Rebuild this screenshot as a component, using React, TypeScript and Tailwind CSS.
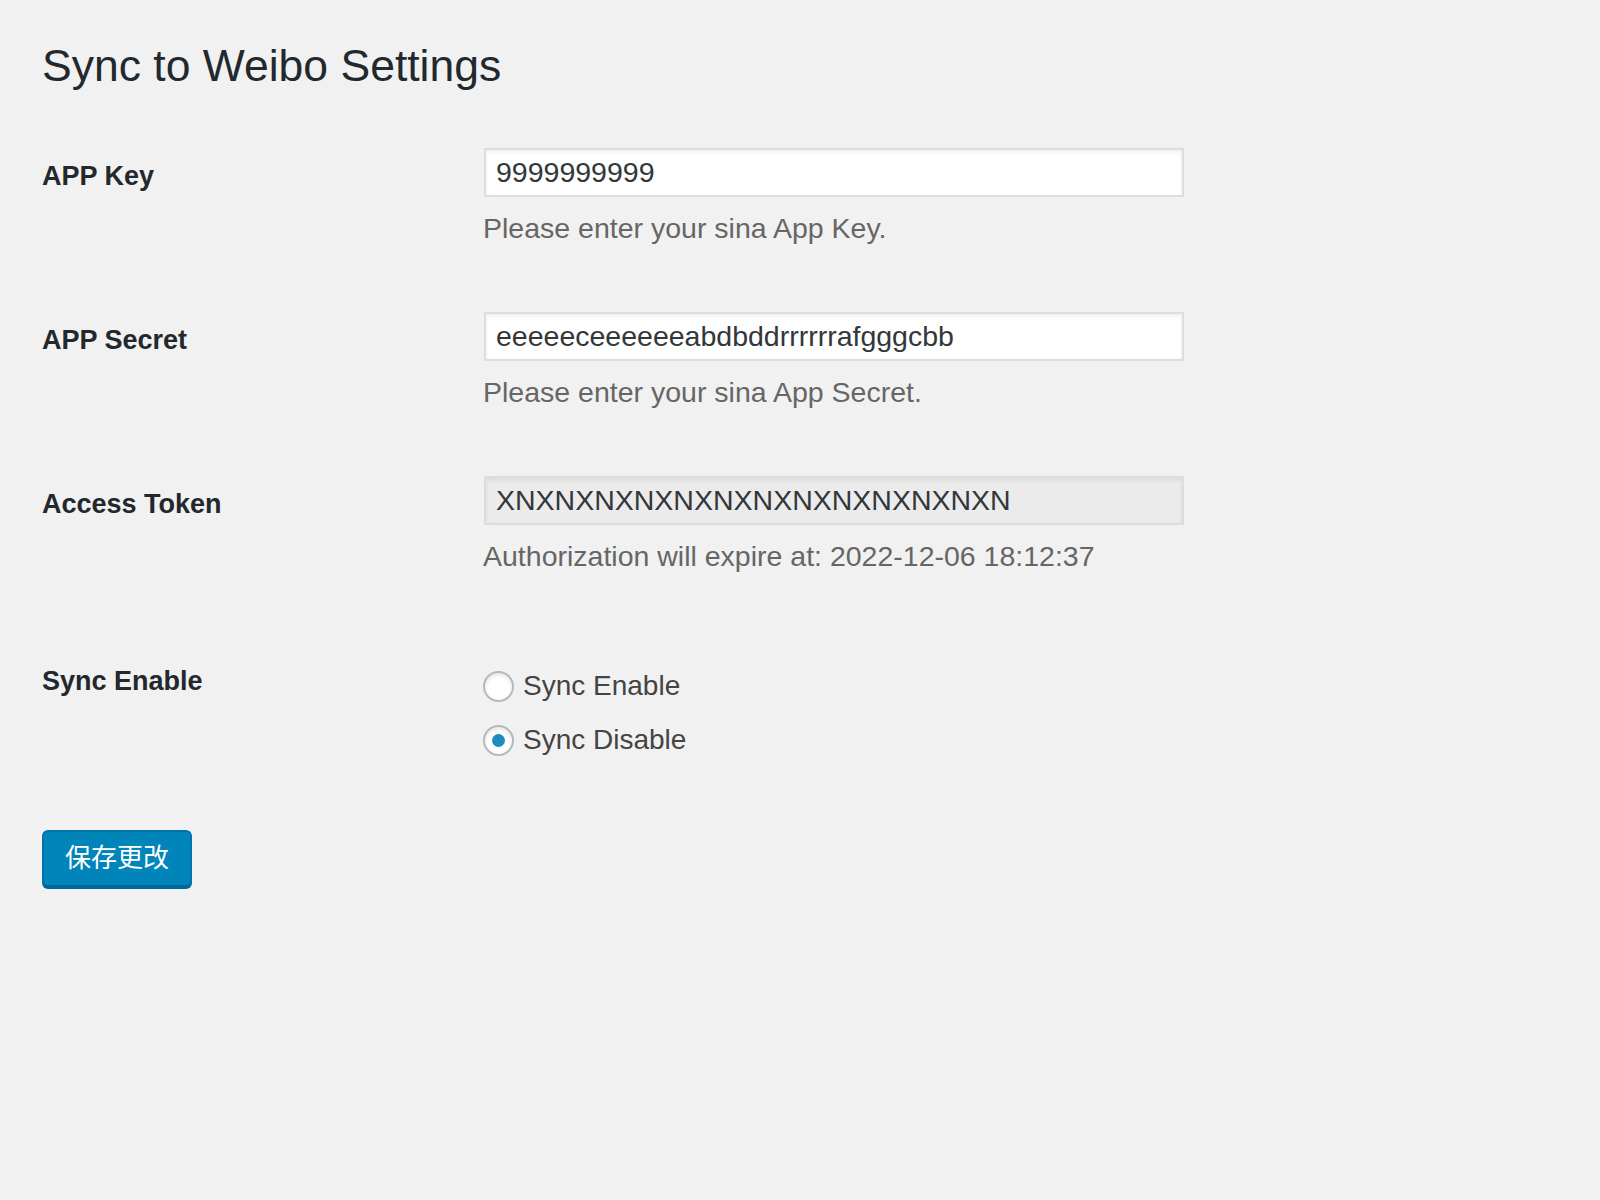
import React from 'react';

const sans = "font-['Liberation_Sans',Arial,sans-serif]";

type RowProps = {
  label: string;
  value: string;
  note: string;
  readOnly?: boolean;
};

const TextRow: React.FC<RowProps> = ({ label, value, note, readOnly }) => (
  <div className="flex items-start h-[164px]">
    <div className="w-[442px] shrink-0 pt-[40px]">
      <span className="text-[27px] leading-[36px] font-bold text-[#23282d]">{label}</span>
    </div>
    <div className="pt-[30px]">
      <input
        type="text"
        readOnly
        value={value}
        className={`w-[700px] h-[49px] px-[10px] text-[28.5px] text-[#32373c] border-2 border-[#dddddd] shadow-[inset_0_2px_4px_rgba(0,0,0,0.07)] outline-none ${sans} ${
          readOnly ? 'bg-[#ebebeb]' : 'bg-white'
        }`}
      />
      <p className="mt-[13px] -ml-[1px] text-[28.5px] leading-[36px] text-[#666666]">{note}</p>
    </div>
  </div>
);

const Radio: React.FC<{ checked?: boolean; label: string }> = ({ checked, label }) => (
  <label className="flex items-center gap-[9px] h-[54px]">
    <span className="w-[31px] h-[31px] -ml-[1px] rounded-full border-2 border-[#b4b9be] bg-white shadow-[inset_0_2px_4px_rgba(0,0,0,0.1)] flex items-center justify-center">
      {checked && <span className="w-[13px] h-[13px] rounded-full bg-[#1e8cbe]" />}
    </span>
    <span className="text-[28px] text-[#444444]">{label}</span>
  </label>
);

const App: React.FC = () => {
  return (
    <div className={`min-h-[1200px] bg-[#f1f1f1] pl-[42px] ${sans}`}>
      <h1 className="pt-[36px] text-[44.5px] leading-[60px] font-normal text-[#23282d]">
        Sync to Weibo Settings
      </h1>

      <div className="mt-[22px]">
        <TextRow label="APP Key" value="9999999999" note="Please enter your sina App Key." />
        <TextRow
          label="APP Secret"
          value="eeeeeceeeeeeabdbddrrrrrrafgggcbb"
          note="Please enter your sina App Secret."
        />
        <TextRow
          label="Access Token"
          value="XNXNXNXNXNXNXNXNXNXNXNXNXN"
          note="Authorization will expire at: 2022-12-06 18:12:37"
          readOnly
        />

        <div className="flex items-start mt-[18px]">
          <div className="w-[442px] shrink-0 pt-[35px]">
            <span className="text-[27px] leading-[36px] font-bold text-[#23282d]">Sync Enable</span>
          </div>
          <div className="pt-[31px] flex flex-col">
            <Radio label="Sync Enable" />
            <Radio label="Sync Disable" checked />
          </div>
        </div>
      </div>

      <button
        type="button"
        className="mt-[63px] h-[57px] px-[21px] rounded-[6px] bg-[#0085ba] border-2 border-[#0073aa] border-b-[#006799] shadow-[0_2px_0_#006799] text-white text-[26px] font-['Liberation_Sans','Noto_Sans_CJK_SC',sans-serif]"
      >
        保存更改
      </button>
    </div>
  );
};

export default App;
